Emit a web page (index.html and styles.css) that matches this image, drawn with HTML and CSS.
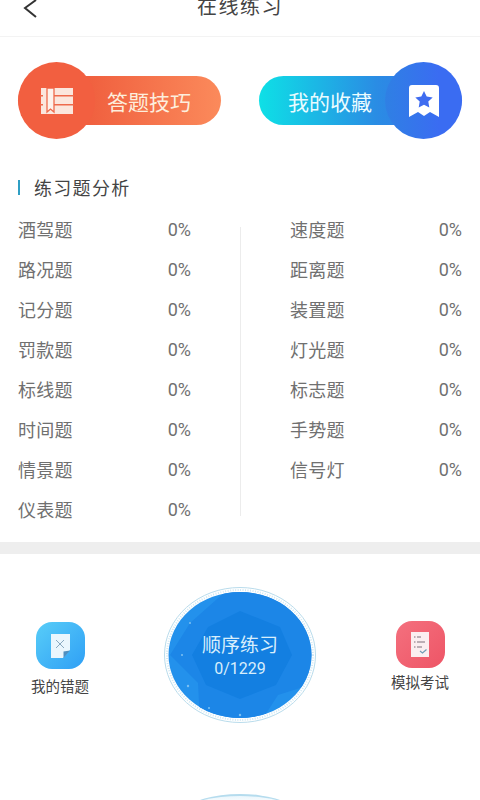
FILE: index.html
```html
<!DOCTYPE html>
<html lang="zh">
<head>
<meta charset="utf-8">
<title>在线练习</title>
<link rel="stylesheet" href="styles.css">
</head>
<body>
<div class="page">
  <header class="topbar">
    <svg class="back" viewBox="0 0 16 24" width="16" height="24"><path d="M14 0 L3 8 L14 17" fill="none" stroke="#333" stroke-width="2"/></svg>
    <h1 class="title">在线练习</h1>
  </header>

  <section class="actions">
    <div class="pill pill-orange">
      <div class="disc disc-orange">
        <svg viewBox="0 0 34 26" width="34" height="26"><path fill="#fbe6dd" d="M1 0h32v26H1z"/><path fill="#ee6a4c" d="M14 7h20v1.500H14zM14 16h20v1.500H14z"/><path fill="#ee6a4c" d="M0 7h3v1.500H0zM0 16h3v1.500H0z"/><path fill="#fdf2ec" stroke="#ee6a4c" stroke-width="1.300" d="M7 0h7v24l-3.500-3-3.500 3z"/></svg>
      </div>
      <span class="pill-label label-left">答题技巧</span>
    </div>
    <div class="pill pill-blue">
      <span class="pill-label label-right">我的收藏</span>
      <div class="disc disc-blue">
        <svg viewBox="0 0 32 34" width="32" height="34"><path fill="#fff" d="M4 1h24a3 3 0 0 1 3 3v29l-9-5-6 4-6-4-9 5V4a3 3 0 0 1 3-3z"/><path fill="#3f6cf0" d="M16 7l2.700 5.500 6 .9-4.400 4.200 1 6-5.300-2.800-5.300 2.800 1-6-4.400-4.200 6-.9z"/></svg>
      </div>
    </div>
  </section>

  <h2 class="section-title">练习题分析</h2>

  <section class="stats">
    <ul class="col">
      <li><span>酒驾题</span><span>0%</span></li>
      <li><span>路况题</span><span>0%</span></li>
      <li><span>记分题</span><span>0%</span></li>
      <li><span>罚款题</span><span>0%</span></li>
      <li><span>标线题</span><span>0%</span></li>
      <li><span>时间题</span><span>0%</span></li>
      <li><span>情景题</span><span>0%</span></li>
      <li><span>仪表题</span><span>0%</span></li>
    </ul>
    <div class="vline"></div>
    <ul class="col col-right">
      <li><span>速度题</span><span>0%</span></li>
      <li><span>距离题</span><span>0%</span></li>
      <li><span>装置题</span><span>0%</span></li>
      <li><span>灯光题</span><span>0%</span></li>
      <li><span>标志题</span><span>0%</span></li>
      <li><span>手势题</span><span>0%</span></li>
      <li><span>信号灯</span><span>0%</span></li>
    </ul>
  </section>

  <div class="band"></div>

  <section class="practice">
    <div class="tool tool-left">
      <div class="tile tile-blue">
        <svg viewBox="0 0 21 25" width="21" height="25"><path fill="#eaf6fd" d="M1 1h19v16l-7 8H1z"/><path fill="#4f8fc0" d="M13.500 25v-6.500l6.500-1z"/><path fill="none" stroke="#8aa9c0" stroke-width="1" d="M6 7l8 8M14 7l-8 8"/></svg>
      </div>
      <span class="tool-label">我的错题</span>
    </div>

    <div class="orb">
      <svg class="orb-art" viewBox="0 0 160 144" width="160" height="144">
        <defs><clipPath id="orb-clip"><ellipse cx="80" cy="72" rx="71.500" ry="63"/></clipPath></defs>
        <ellipse cx="80" cy="72" rx="75.500" ry="67.500" fill="none" stroke="#b9dcec" stroke-width="1"/>
        <ellipse cx="80" cy="72" rx="73" ry="65" fill="none" stroke="#cfe7f3" stroke-width="2" stroke-dasharray="1 1.500"/>
        <g clip-path="url(#orb-clip)">
          <rect width="160" height="144" fill="#2391ec"/>
          <path fill="#1c86e7" d="M66 8 L156 8 L156 100 L118 112 L100 140 L40 140 L38 100 L10 72 L30 40z"/>
          <path fill="#137fe1" d="M80 28 L120 44 L132 72 L116 102 L80 116 L46 102 L32 72 L48 44z"/>
        </g>
        <circle cx="30" cy="40" r="1" fill="#7cc0f2"/><circle cx="22" cy="72" r="1" fill="#7cc0f2"/><circle cx="28" cy="103" r="1.200" fill="#7cc0f2"/><circle cx="49" cy="125" r="1" fill="#7cc0f2"/><circle cx="80" cy="132" r="1.200" fill="#7cc0f2"/>
      </svg>
      <div class="orb-text">
        <span class="orb-name">顺序练习</span>
        <span class="orb-count">0/1229</span>
      </div>
    </div>

    <div class="tool tool-right">
      <div class="tile tile-red">
        <svg viewBox="0 0 18 25" width="18" height="25"><path fill="#fbeef0" d="M0 0h18v25H0z"/><path fill="none" stroke="#7d6f7a" stroke-width="1" d="M3 5h1.500M6 5h4M3 10h1.500M6 10h8M3 15h1.500M6 15h5"/><path fill="none" stroke="#6f9cb5" stroke-width="1.200" d="M9 19l2.500 2 4-3.500"/></svg>
      </div>
      <span class="tool-label label-tight">模拟考试</span>
    </div>
  </section>

  <div class="next-orb"></div>
</div>
</body>
</html>
```

FILE: styles.css
```css
* { box-sizing: border-box; }
html, body { margin: 0; padding: 0; }
body {
  width: 480px;
  height: 800px;
  overflow: hidden;
  background: #fff;
  font-family: "Noto Sans CJK SC", "Liberation Sans", sans-serif;
  color: #666;
}
.page { width: 480px; height: 800px; overflow: hidden; }

.topbar {
  height: 37px;
  border-bottom: 1px solid #f3f3f3;
  display: flex;
  justify-content: center;
  position: relative;
  overflow: hidden;
}
.back { position: absolute; left: 22px; top: 0; }
.title {
  margin: -7px 0 0;
  font-size: 20px;
  line-height: 26px;
  font-weight: 400;
  color: #444;
  letter-spacing: 1.5px;
}

.actions {
  display: flex;
  justify-content: space-between;
  padding: 39px 18px 0;
}
.pill {
  width: 203px;
  height: 49px;
  border-radius: 25px;
  display: flex;
  align-items: center;
  color: #fff;
  position: relative;
}
.pill-orange { background: linear-gradient(90deg, #f0603f 35%, #fb8a5b 100%); }
.pill-blue { background: linear-gradient(90deg, #0ee0e6 0%, #2a8ce4 58%, #3f6cf0 100%); }
.disc {
  width: 77px;
  height: 77px;
  border-radius: 50%;
  display: flex;
  align-items: center;
  justify-content: center;
  flex: none;
  margin: -14px 0;
}
.disc-orange { background: #f25f40; }
.disc-blue { background: linear-gradient(90deg, #2f80e4, #3a6cf2 70%); margin-left: auto; }
.pill-label { font-size: 21px; line-height: 28px; color: #fdeedd; }
.label-left { margin-left: 12px; }
.label-right { margin-left: 29px; color: #eafcff; }

.section-title {
  margin: 50px 0 0 18px;
  padding-left: 16px;
  font-size: 18px;
  line-height: 24px;
  font-weight: 400;
  color: #444;
  letter-spacing: 1.300px;
  position: relative;
}
.section-title::before {
  content: "";
  position: absolute;
  left: 0;
  top: 5px;
  width: 2px;
  height: 15px;
  background: #2f9fc4;
}

.stats {
  display: flex;
  padding: 10px 18px 0;
  height: 343px;
}
.col {
  list-style: none;
  margin: 0;
  padding: 0;
  width: 173px;
  flex: none;
}
.col-right { width: 172px; }
.col li {
  height: 40px;
  display: flex;
  justify-content: space-between;
  align-items: center;
  font-family: "Roboto", "Liberation Sans", sans-serif;
  font-size: 18px;
  color: #707070;
}
.col li span:first-child {
  font-family: "Noto Sans CJK SC", sans-serif;
  font-size: 18px;
  letter-spacing: 0.300px;
}
.vline {
  width: 1px;
  height: 289px;
  margin: 18px 49px 0;
  background: #ececec;
  flex: none;
}

.band { height: 12px; background: #eeeeee; }

.practice {
  height: 202px;
  display: flex;
  align-items: center;
  justify-content: space-between;
  position: relative;
}
.tool {
  width: 70px;
  display: flex;
  flex-direction: column;
  align-items: center;
  gap: 8px;
}
.tool-left { margin: 6px 0 0 25px; }
.tool-right { margin: 2px 25px 0 0; }
.tile {
  width: 49px;
  height: 47px;
  border-radius: 16px;
  display: flex;
  align-items: center;
  justify-content: center;
}
.tile-blue { background: linear-gradient(135deg, #58cdf8, #2f9ff5); }
.tile-red { background: linear-gradient(135deg, #f4707e, #ee5566); }
.tool-label { font-size: 14.500px; line-height: 18px; color: #444; white-space: nowrap; }
.label-tight { margin-top: -3px; }

.orb {
  width: 160px;
  height: 144px;
  position: relative;
  flex: none;
}
.orb-art { display: block; }
.orb-text {
  position: absolute;
  inset: 0;
  display: flex;
  flex-direction: column;
  align-items: center;
  justify-content: center;
  gap: 2px;
  color: #d8eefc;
}
.orb-name { font-size: 19px; line-height: 26px; }
.orb-count { font-family: "Roboto", sans-serif; font-size: 16px; line-height: 20px; }

.next-orb {
  width: 100px;
  height: 30px;
  margin: 38px auto 0;
  border-radius: 50%;
  border-top: 2px solid #b5dcee;
  background: linear-gradient(180deg, #eaf6fc, #ffffff 30%);
}
```
